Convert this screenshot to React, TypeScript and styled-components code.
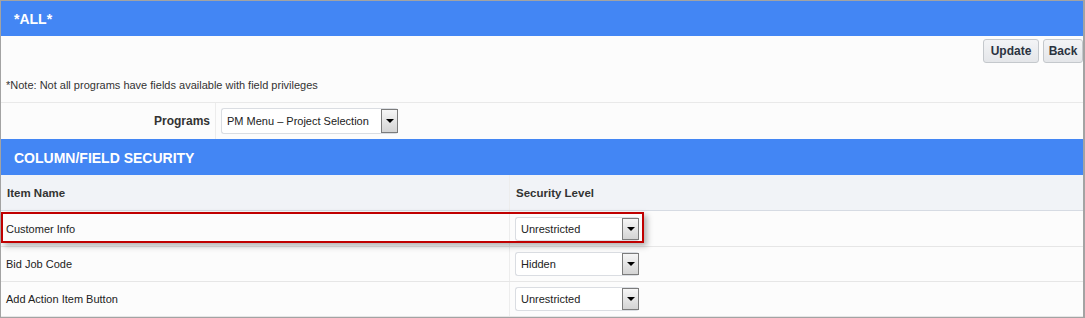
import styled, { createGlobalStyle } from "styled-components";

const GlobalStyle = createGlobalStyle`
  * {
    box-sizing: border-box;
  }
  body {
    margin: 0;
    background: #ffffff;
    font-family: "Liberation Sans", Arial, sans-serif;
    color: #222;
  }
`;

const Frame = styled.div`
  width: 1085px;
  height: 318px;
  border: 1px solid #a3a3a3;
  border-right-width: 2px;
  background: #fcfcfc;
  overflow: hidden;
`;

const BlueBar = styled.div<{ $h: number }>`
  height: ${(p) => p.$h}px;
  background: #4386f4;
  color: #fff;
  font-weight: 700;
  font-size: 14px;
  display: flex;
  align-items: center;
  padding-left: 13px;
  padding-top: 1px;
`;

const Actions = styled.div`
  height: 67px;
  display: flex;
  flex-direction: column;
  border-bottom: 1px solid #e9e9e9;
`;

const ButtonBar = styled.div`
  display: flex;
  justify-content: flex-end;
  gap: 4px;
  padding-top: 3px;
`;

const Button = styled.button<{ $w: number }>`
  width: ${(p) => p.$w}px;
  height: 24px;
  padding: 0;
  border: 1px solid #c4c8cc;
  border-radius: 3px;
  background: linear-gradient(#f3f4f6, #e4e6e9);
  font-family: "Liberation Sans", Arial, sans-serif;
  font-weight: 700;
  font-size: 12px;
  color: #2b3340;
  cursor: pointer;
`;

const Note = styled.div`
  margin-top: 15px;
  padding-left: 5px;
  font-size: 11px;
  line-height: 14px;
  color: #333;
`;

const FormRow = styled.div`
  height: 36px;
  display: grid;
  grid-template-columns: 215px 1fr;
`;

const Label = styled.div`
  display: flex;
  align-items: center;
  justify-content: flex-end;
  padding-right: 5px;
  font-weight: 700;
  font-size: 12px;
  color: #333;
  border-right: 1px solid #ececec;
`;

const Field = styled.div`
  display: flex;
  align-items: center;
  padding-left: 5px;
`;

const SelectBox = styled.div<{ $w: number; $h: number }>`
  width: ${(p) => p.$w}px;
  height: ${(p) => p.$h}px;
  display: flex;
  align-items: center;
  justify-content: space-between;
  background: #fff;
  border: 1px solid #dadde2;
  border-right: none;
  border-radius: 3px;
  padding-left: 5px;
  font-size: 11px;
  color: #222;
`;

const Arrow = styled.span<{ $h: number }>`
  width: 17px;
  height: ${(p) => p.$h}px;
  border: 1px solid #7c7c7c;
  background: linear-gradient(#f6f6f6, #d4d4d4);
  display: flex;
  align-items: center;
  justify-content: center;
  &::after {
    content: "";
    border-left: 4px solid transparent;
    border-right: 4px solid transparent;
    border-top: 4px solid #000;
  }
`;

const Table = styled.div`
  position: relative;
`;

const Row = styled.div<{ $head?: boolean; $h: number }>`
  height: ${(p) => p.$h}px;
  display: grid;
  grid-template-columns: 508px 1fr;
  background: ${(p) => (p.$head ? "#f1f3f7" : "#fcfcfc")};
  border-bottom: 1px solid ${(p) => (p.$head ? "#d6dbe3" : "#e6e6e6")};
  &:last-of-type {
    border-bottom: ${(p) => (p.$head ? "1px solid #d6dbe3" : "none")};
  }
`;

const Cell = styled.div<{ $head?: boolean }>`
  display: flex;
  align-items: center;
  padding-left: ${(p) => (p.$head ? 6 : 5)}px;
  font-size: ${(p) => (p.$head ? "11.5px" : "11px")};
  font-weight: ${(p) => (p.$head ? 700 : 400)};
  color: ${(p) => (p.$head ? "#333" : "#222")};
  & + & {
    border-left: 1px solid ${(p) => (p.$head ? "#dde1e7" : "#ededed")};
  }
`;

const Highlight = styled.div`
  position: absolute;
  left: 0;
  top: 1px;
  width: 643px;
  height: 31px;
  border: 2px solid #c00000;
  box-shadow: 3px 3px 6px rgba(0, 0, 0, 0.3);
  pointer-events: none;
`;

function Select({ value, w, h }: { value: string; w: number; h: number }) {
  return (
    <SelectBox $w={w} $h={h}>
      <span>{value}</span>
      <Arrow $h={h - 2} />
    </SelectBox>
  );
}

const items = [
  { name: "Customer Info", level: "Unrestricted", h: 36 },
  { name: "Bid Job Code", level: "Hidden", h: 35 },
  { name: "Add Action Item Button", level: "Unrestricted", h: 35 },
];

export default function App() {
  return (
    <>
      <GlobalStyle />
      <Frame>
        <BlueBar $h={35}>*ALL*</BlueBar>
        <Actions>
          <ButtonBar>
            <Button $w={56}>Update</Button>
            <Button $w={40}>Back</Button>
          </ButtonBar>
          <Note>*Note: Not all programs have fields available with field privileges</Note>
        </Actions>
        <FormRow>
          <Label>Programs</Label>
          <Field>
            <Select value="PM Menu – Project Selection" w={177} h={26} />
          </Field>
        </FormRow>
        <BlueBar $h={36}>COLUMN/FIELD SECURITY</BlueBar>
        <Row $head $h={36}>
          <Cell $head>Item Name</Cell>
          <Cell $head>Security Level</Cell>
        </Row>
        <Table>
          {items.map((item) => (
            <Row key={item.name} $h={item.h}>
              <Cell>{item.name}</Cell>
              <Cell>
                <Select value={item.level} w={124} h={24} />
              </Cell>
            </Row>
          ))}
          <Highlight />
        </Table>
      </Frame>
    </>
  );
}
